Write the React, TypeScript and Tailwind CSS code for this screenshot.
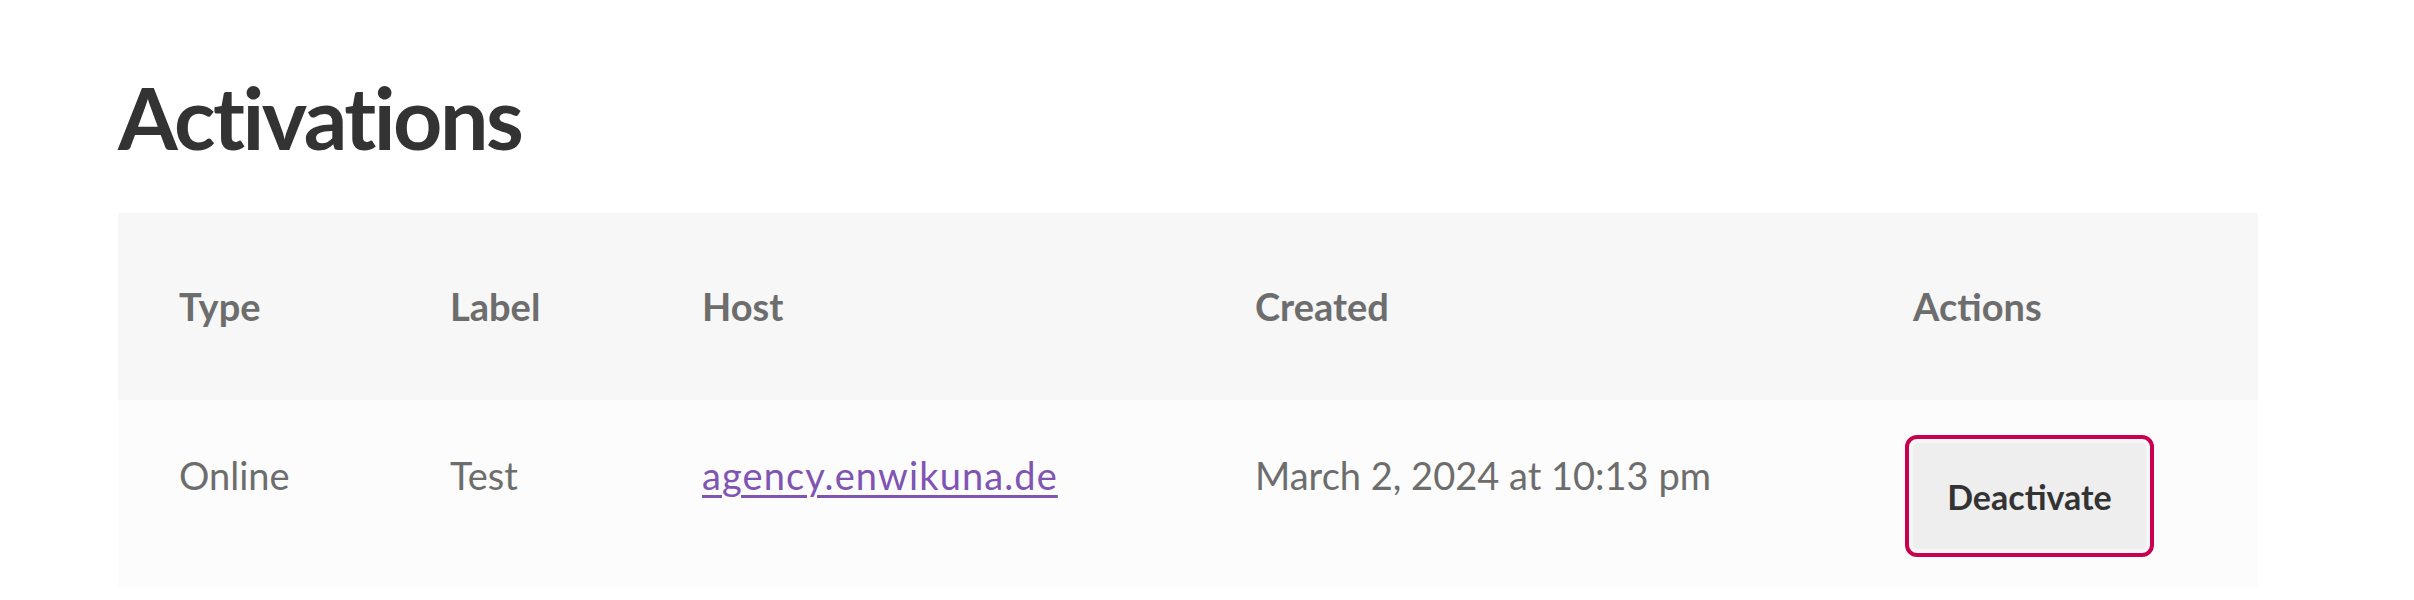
import React from 'react'

const font = { fontFamily: '"Lato", "Open Sans", sans-serif' }

export default function App() {
  return (
    <div className="min-h-[600px] bg-white pl-[118px] pr-[156px]" style={font}>
      <h1 className="pt-[74px] h-[213px] text-[86px] leading-none font-bold tracking-[-2.5px] text-[#333333]">
        Activations
      </h1>

      <table className="w-full table-fixed border-collapse text-left text-[38px] text-[#6d6d6d]">
        <colgroup>
          <col className="w-[332px]" />
          <col className="w-[252px]" />
          <col className="w-[553px]" />
          <col className="w-[658px]" />
          <col />
        </colgroup>
        <thead>
          <tr className="h-[187px] bg-[#f7f7f7]">
            <th className="pl-[61px] font-bold">Type</th>
            <th className="font-bold">Label</th>
            <th className="font-bold">Host</th>
            <th className="font-bold">Created</th>
            <th className="font-bold">Actions</th>
          </tr>
        </thead>
        <tbody>
          <tr className="h-[188px] bg-[#fcfcfc]">
            <td className="pl-[61px] pb-[38px]">Online</td>
            <td className="pb-[38px]">Test</td>
            <td className="pb-[38px]">
              <a href="#" className="text-[#7f54b3] tracking-[1.1px] underline decoration-[3px] underline-offset-[5px]">
                agency.enwikuna.de
              </a>
            </td>
            <td className="pb-[38px]">March 2, 2024 at 10:13 pm</td>
            <td>
              <button className="-ml-[8px] mt-[4px] h-[122px] w-[249px] rounded-[12px] border-[4px] border-[#c9004f] bg-[#eeeeee] text-[34px] font-bold text-[#333333] shadow-[inset_0_0_0_4px_#f6f6f6]">
                Deactivate
              </button>
            </td>
          </tr>
        </tbody>
      </table>
    </div>
  )
}
